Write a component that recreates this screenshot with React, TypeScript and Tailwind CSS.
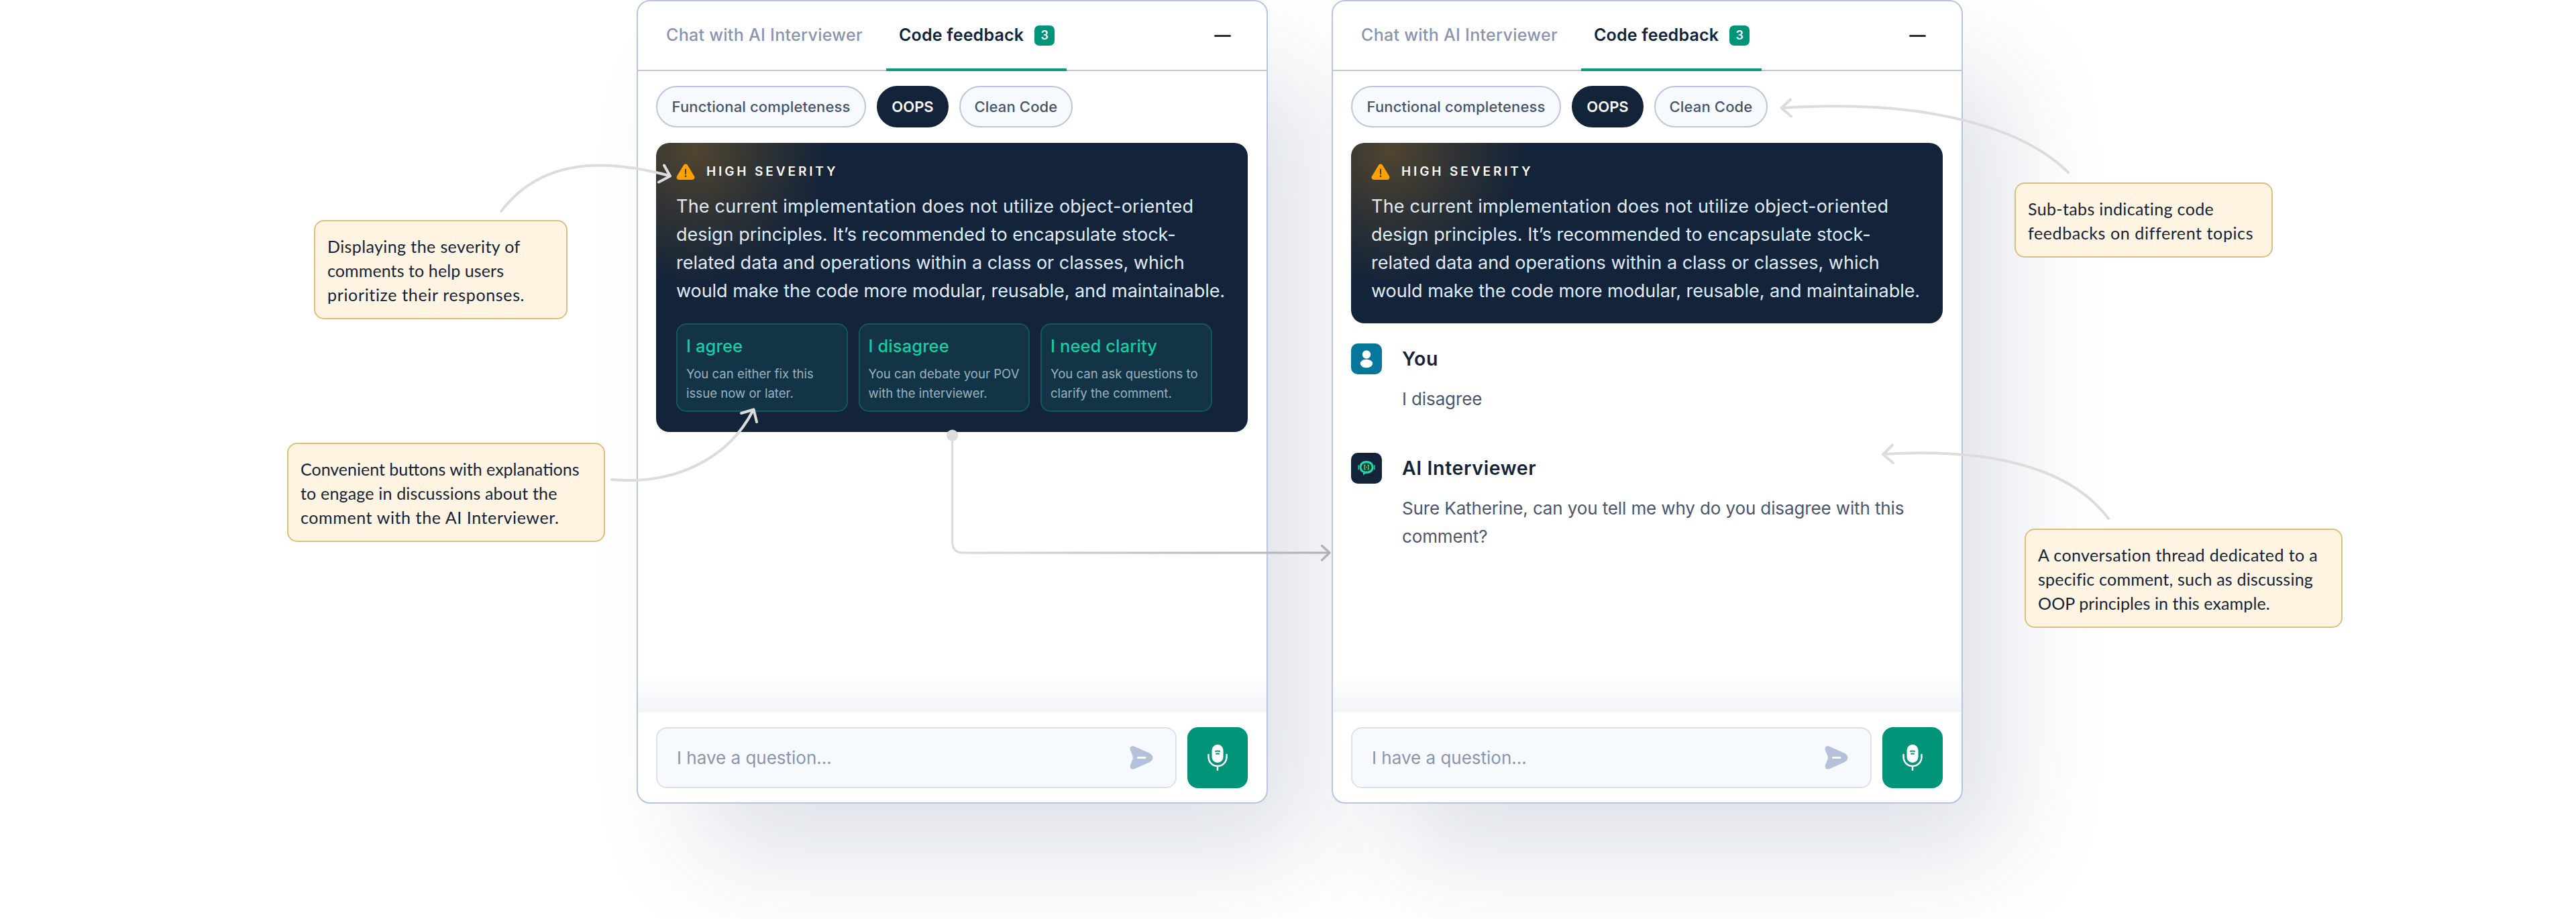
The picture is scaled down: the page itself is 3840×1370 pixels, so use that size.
import type { ReactNode } from "react";
import clsx from "clsx";

const topics = [
  { label: "Functional completeness", width: "w-[313px]" },
  { label: "OOPS", width: "w-[107px]", active: true },
  { label: "Clean Code", width: "w-[169px]" },
];

const replies = [
  { title: "I agree", lines: ["You can either fix this", "issue now or later."] },
  { title: "I disagree", lines: ["You can debate your POV", "with the interviewer."] },
  { title: "I need clarity", lines: ["You can ask questions to", "clarify the comment."] },
];

function WarningIcon() {
  return (
    <svg className="w-7 h-6" viewBox="0 0 28 24">
      <path
        d="M11 2.200C12.300 0 15.700 0 17 2.200L27 18.800C28.300 21.200 26.800 24 24 24H4C1.200 24 -.3 21.200 1 18.800Z"
        fill="#ffa100"
      />
      <path d="M14 8.500v6.500" stroke="#4a3a10" strokeWidth={2} strokeLinecap="round" />
      <circle cx="14" cy="18.700" r="1.400" fill="#4a3a10" />
    </svg>
  );
}

function SendIcon() {
  return (
    <svg className="w-[35px] h-[35px]" viewBox="0 0 35 35">
      <path
        d="M.8 6C-.3 2 2.500 -.8 7 .800L29 10.500C36.300 14 36.300 21 29 24.500L7 34.200C2.500 35.800 -.3 33 .8 29L4.300 20.500C5 18.500 5 16.500 4.300 14.500Z"
        fill="#b5c1da"
      />
      <path d="M12.500 17.500h10.500" stroke="#fff" strokeWidth={3} strokeLinecap="round" />
    </svg>
  );
}

function MicIcon() {
  return (
    <svg className="w-[30px] h-[39px]" viewBox="0 0 30 39" fill="none">
      <rect x="6.500" y="0" width="17" height="27" rx="8.500" fill="#fff" />
      <path d="M1.500 15v3.500a13.500 13.500 0 0 0 27 0V15M15 32v6" stroke="#fff" strokeWidth={2.500} strokeLinecap="round" />
      <path d="M12 10q3-1 6 0M13 13.800q2-.6 4 0" stroke="#009578" strokeWidth={2} strokeLinecap="round" />
    </svg>
  );
}

function UserAvatar() {
  return (
    <div className="w-[46px] h-[46px] rounded-[10px] bg-[#06779b]">
      <svg viewBox="0 0 46 46" fill="#fff">
        <circle cx="23" cy="16.500" r="6.200" />
        <ellipse cx="23" cy="30" rx="9.200" ry="6.200" />
      </svg>
    </div>
  );
}

function BotAvatar() {
  return (
    <div className="w-[46px] h-[46px] rounded-[10px] bg-[#132339]">
      <svg viewBox="0 0 46 46" fill="none">
        <path
          d="M23 12c-7 0-10.500 4-10.500 9.500 0 4 2 7 5.500 8.300V34c1-2 2.500-3 5-3 7 0 10.500-4 10.500-9.500S30 12 23 12Z"
          fill="#25d3a5"
        />
        <rect x="15.500" y="15.500" width="15" height="12" rx="6" fill="#123b3f" />
        <path d="M21.500 18.500h-1.500v6h1.500M24.500 18.500h1.500v6h-1.500M23 20.500v2" stroke="#6ee04b" strokeWidth={1.300} />
        <path d="M11.200 19v5.500M34.800 19v5.500" stroke="#1fb592" strokeWidth={2} strokeLinecap="round" />
      </svg>
    </div>
  );
}

function Header() {
  return (
    <div className="h-[104px] flex items-center pl-[42px] pr-[53px] border-b-2 border-[#bdc6dd]">
      <span className="w-[328px] text-[25px] font-medium tracking-[0.3px] text-[#8a94b0]">
        Chat with AI Interviewer
      </span>
      <div className="h-[104px] -mb-0.5 w-[269px] pt-0.5 pl-[19px] flex items-center border-b-4 border-[#0b9a7c]">
        <span className="text-[25px] font-semibold tracking-[0.2px] text-[#132339]">Code feedback</span>
        <span className="ml-4 w-[30px] h-[30px] rounded-[7px] bg-[#009578] text-white text-lg font-semibold flex items-center justify-center">
          3
        </span>
      </div>
      <div className="ml-auto w-[25px] h-[3px] rounded-sm bg-[#2c2c2c]" />
    </div>
  );
}

function Topics() {
  return (
    <div className="mt-[22px] flex gap-4">
      {topics.map(({ label, width, active }) => (
        <div
          key={label}
          className={clsx(
            "h-[62px] rounded-full border-2 flex items-center justify-center text-[22px] whitespace-nowrap",
            width,
            active
              ? "bg-[#132339] border-[#132339] text-white font-semibold"
              : "bg-[#f6faff] border-[#bcc4de] text-[#46536a] font-medium tracking-[0.15px]",
          )}
        >
          {label}
        </div>
      ))}
    </div>
  );
}

function SeverityCard({ children }: { children?: ReactNode }) {
  return (
    <div className="mt-[23px] pt-[31px] pl-[30px] pb-[27px] rounded-[20px] bg-[#132339] bg-[radial-gradient(circle_at_58px_12px,rgba(255,165,20,0.26),rgba(255,165,20,0.13)_90px,transparent_200px)]">
      <div className="h-6 flex items-center gap-[17px]">
        <WarningIcon />
        <span className="text-[19px] font-semibold tracking-[3.9px] text-white">HIGH SEVERITY</span>
      </div>
      <div className="mt-[19px] text-[27px] leading-[42px] text-[#dfebfa] whitespace-nowrap">
        <p className="tracking-[0.22px]">The current implementation does not utilize object-oriented</p>
        <p>design principles. It’s recommended to encapsulate stock-</p>
        <p>related data and operations within a class or classes, which</p>
        <p className="tracking-[-0.05px]">would make the code more modular, reusable, and maintainable.</p>
      </div>
      {children}
    </div>
  );
}

function ReplyOptions() {
  return (
    <div className="mt-[27px] mb-[3px] flex gap-4">
      {replies.map((reply) => (
        <div
          key={reply.title}
          className="w-[255.500px] h-[132px] pt-4 pl-[13px] rounded-[15px] border-2 border-[#0f575c] bg-[#123446] whitespace-nowrap"
        >
          <p className="text-[25.5px] leading-8 font-medium tracking-[0.1px] text-[#14cfa4]">{reply.title}</p>
          <div className="mt-[11px] text-[18.5px] leading-[28.5px] tracking-[0.05px] text-[#9db2c0]">
            {reply.lines.map((line) => (
              <p key={line}>{line}</p>
            ))}
          </div>
        </div>
      ))}
    </div>
  );
}

function Message({ avatar, name, lines }: { avatar: ReactNode; name: string; lines: string[] }) {
  return (
    <div>
      <div className="flex items-center gap-[30px]">
        {avatar}
        <span className="text-[28.5px] leading-[46px] font-semibold tracking-[0.6px] text-[#132339]">{name}</span>
      </div>
      <div className="mt-4 pl-[76px] text-[26px] leading-[42px] tracking-[-0.12px] text-[#4b556d] whitespace-nowrap">
        {lines.map((line) => (
          <p key={line}>{line}</p>
        ))}
      </div>
    </div>
  );
}

function Panel({ children }: { children: ReactNode }) {
  return (
    <section className="w-[941px] h-[1198px] shrink-0 flex flex-col rounded-[20px] border-2 border-[#b7c5de] bg-white overflow-hidden shadow-[76px_92px_150px_-20px_rgba(20,45,95,0.15)]">
      <Header />
      <div className="pl-[27px] pr-7">
        <Topics />
        {children}
      </div>
      <div className="mt-auto h-[54px] bg-gradient-to-b from-white to-[#f2f5f9]" />
      <div className="h-[134px] pt-[22px] pl-[27px] flex gap-4">
        <div className="w-[776px] h-[91px] pl-[29px] pr-[33px] flex items-center justify-between rounded-2xl border-2 border-[#dde1e8] bg-[#f6faff]">
          <span className="text-[26px] text-[#8a94ae]">I have a question...</span>
          <SendIcon />
        </div>
        <button className="w-[90px] h-[91px] flex items-center justify-center rounded-2xl bg-[#009578]">
          <MicIcon />
        </button>
      </div>
    </section>
  );
}

function Note({ className, lines }: { className: string; lines: [string, string][] }) {
  return (
    <div
      className={clsx(
        "relative z-10 pt-[19px] pl-[18px] rounded-[15px] border-2 border-[#dcbf7f] bg-[#fff4e1] font-[Lato,sans-serif] text-[25px] leading-9 text-[#132339] whitespace-nowrap",
        className,
      )}
    >
      {lines.map(([text, tracking]) => (
        <p key={text} className={tracking}>{text}</p>
      ))}
    </div>
  );
}

function Arrows() {
  return (
    <svg
      className="absolute left-0 top-0 z-20 w-[3840px] h-[1370px] pointer-events-none"
      viewBox="0 0 3840 1370"
      fill="none"
      stroke="#dcdcdc"
      strokeWidth={4}
      strokeLinecap="round"
      strokeLinejoin="round"
    >
      <defs>
        <linearGradient id="flow" gradientUnits="userSpaceOnUse" x1="1420" y1="0" x2="1984" y2="0">
          <stop offset="0" stopColor="#dcdcdc" />
          <stop offset="1" stopColor="#b0b0b4" />
        </linearGradient>
      </defs>
      <path d="M747 315C805 239 895 234 998 262M990 246.500L999 262.500L982 271.500" />
      <path d="M912 715C1003 723 1085 686 1123 611M1105 616L1123.500 610.500L1128 629" />
      <path d="M3083 257C3006 181 2846 148 2656 161M2669 148.500L2655.500 161L2670 173.500" />
      <path d="M3143 773C3088 700 2975 667 2807 677M2821 663.500L2807 677.500L2822 690" />
      <g stroke="url(#flow)" strokeWidth={3.200}>
        <path d="M1419.600 655V808Q1420 824 1436 824.200L1980 824" />
        <path d="M1970.500 813.500L1982 824L1970.500 835" />
      </g>
      <circle cx="1419.600" cy="649" r="8.600" fill="#dcdcdc" stroke="none" />
    </svg>
  );
}

export default function App() {
  return (
    <div className="relative w-[3840px] h-[1370px] overflow-hidden bg-white font-[Inter,sans-serif] flex">
      <div className="w-[949px] shrink-0 pt-[328px]">
        <Note
          className="ml-[468px] w-[378px] h-[148px]"
          lines={[
            ["Displaying the severity of", "tracking-[0.4px]"],
            ["comments to help users", "tracking-[0.1px]"],
            ["prioritize their responses.", "tracking-[0.65px]"],
          ]}
        />
        <Note
          className="mt-[184px] ml-[428px] w-[474px] h-[148px]"
          lines={[
            ["Convenient buttons with explanations", "tracking-[0px]"],
            ["to engage in discussions about the", "tracking-[0.18px]"],
            ["comment with the AI Interviewer.", "tracking-[0.6px]"],
          ]}
        />
      </div>
      <Panel>
        <SeverityCard>
          <ReplyOptions />
        </SeverityCard>
      </Panel>
      <div className="w-[95px] shrink-0" />
      <Panel>
        <SeverityCard />
        <div className="mt-[30px] flex flex-col gap-[59px]">
          <Message avatar={<UserAvatar />} name="You" lines={["I disagree"]} />
          <Message
            avatar={<BotAvatar />}
            name="AI Interviewer"
            lines={["Sure Katherine, can you tell me why do you disagree with this", "comment?"]}
          />
        </div>
      </Panel>
      <div className="pt-[272px]">
        <Note
          className="ml-[77px] w-[385px] h-[112px]"
          lines={[
            ["Sub-tabs indicating code", "tracking-[0.35px]"],
            ["feedbacks on different topics", "tracking-[0.6px]"],
          ]}
        />
        <Note
          className="mt-[404px] ml-[92px] w-[474px] h-[148px]"
          lines={[
            ["A conversation thread dedicated to a", "tracking-[0.4px]"],
            ["specific comment, such as discussing", "tracking-[0.22px]"],
            ["OOP principles in this example.", "tracking-[0.12px]"],
          ]}
        />
      </div>
      <Arrows />
    </div>
  );
}
